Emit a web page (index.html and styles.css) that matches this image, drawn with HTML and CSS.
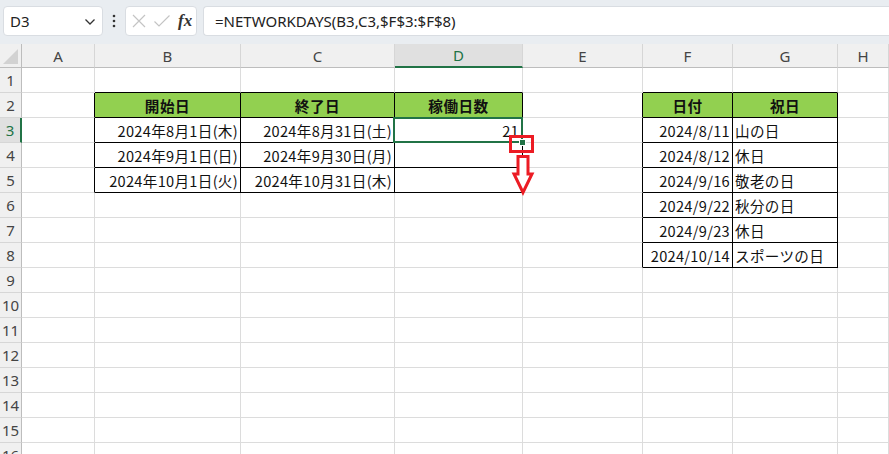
FILE: index.html
```html
<!DOCTYPE html>
<html lang="ja">
<head>
<meta charset="utf-8">
<title>NETWORKDAYS</title>
<link rel="stylesheet" href="styles.css">
</head>
<body>
<div class="app">
  <div class="toolbar">
    <div class="namebox">
      <span class="nb-text">D3</span>
      <svg class="chev" width="12" height="8" viewBox="0 0 12 8"><path d="M1.5 1.5 L6 6 L10.5 1.5" fill="none" stroke="#333" stroke-width="1.3"/></svg>
    </div>
    <div class="dots">
      <svg width="4" height="14" viewBox="0 0 4 14"><circle cx="2" cy="2" r="1.3" fill="#333"/><circle cx="2" cy="7" r="1.3" fill="#333"/><circle cx="2" cy="12" r="1.3" fill="#333"/></svg>
    </div>
    <div class="fxbox">
      <svg width="16" height="16" viewBox="0 0 16 16"><path d="M2 2 L14 14 M14 2 L2 14" stroke="#c4c4c4" stroke-width="1.2" fill="none"/></svg>
      <svg width="18" height="16" viewBox="0 0 18 16"><path d="M1.5 8.5 L6 13 L16.5 2.5" stroke="#c4c4c4" stroke-width="1.2" fill="none"/></svg>
      <span class="fx">fx</span>
    </div>
    <div class="formula">=NETWORKDAYS(B3,C3,$F$3:$F$8)</div>
  </div>

  <div class="sheet">
    <div class="corner"><svg width="22" height="24" viewBox="0 0 22 24"><path d="M3 20 L18 5 L18 20 Z" fill="#d2d2d2"/></svg></div>
    <div class="ch">A</div><div class="ch">B</div><div class="ch">C</div><div class="ch sel">D</div><div class="ch">E</div><div class="ch">F</div><div class="ch">G</div><div class="ch">H</div>

    <div class="rh">1</div><div class="c"></div><div class="c tt"></div><div class="c tt"></div><div class="c tt"></div><div class="c"></div><div class="c tt"></div><div class="c tt"></div><div class="c"></div>

    <div class="rh">2</div><div class="c tl"></div><div class="c t hd">開始日</div><div class="c t hd">終了日</div><div class="c t hd">稼働日数</div><div class="c tl"></div><div class="c t hd">日付</div><div class="c t hd">祝日</div><div class="c"></div>

    <div class="rh rsel">3</div><div class="c tl"></div><div class="c t r">2024年8月1日(木)</div><div class="c t r">2024年8月31日(土)</div><div class="c t r active">21<span class="handle"></span></div><div class="c tl"></div><div class="c t r">2024/8/11</div><div class="c t l">山の日</div><div class="c"></div>

    <div class="rh">4</div><div class="c tl"></div><div class="c t r">2024年9月1日(日)</div><div class="c t r">2024年9月30日(月)</div><div class="c t"></div><div class="c tl"></div><div class="c t r">2024/8/12</div><div class="c t l">休日</div><div class="c"></div>

    <div class="rh">5</div><div class="c tl"></div><div class="c t r">2024年10月1日(火)</div><div class="c t r">2024年10月31日(木)</div><div class="c t"></div><div class="c tl"></div><div class="c t r">2024/9/16</div><div class="c t l">敬老の日</div><div class="c"></div>

    <div class="rh">6</div><div class="c"></div><div class="c"></div><div class="c"></div><div class="c"></div><div class="c tl"></div><div class="c t r">2024/9/22</div><div class="c t l">秋分の日</div><div class="c"></div>

    <div class="rh">7</div><div class="c"></div><div class="c"></div><div class="c"></div><div class="c"></div><div class="c tl"></div><div class="c t r">2024/9/23</div><div class="c t l">休日</div><div class="c"></div>

    <div class="rh">8</div><div class="c"></div><div class="c"></div><div class="c"></div><div class="c"></div><div class="c tl"></div><div class="c t r">2024/10/14</div><div class="c t l">スポーツの日</div><div class="c"></div>

    <div class="rh">9</div><div class="c"></div><div class="c"></div><div class="c"></div><div class="c"></div><div class="c"></div><div class="c"></div><div class="c"></div><div class="c"></div>
    <div class="rh">10</div><div class="c"></div><div class="c"></div><div class="c"></div><div class="c"></div><div class="c"></div><div class="c"></div><div class="c"></div><div class="c"></div>
    <div class="rh">11</div><div class="c"></div><div class="c"></div><div class="c"></div><div class="c"></div><div class="c"></div><div class="c"></div><div class="c"></div><div class="c"></div>
    <div class="rh">12</div><div class="c"></div><div class="c"></div><div class="c"></div><div class="c"></div><div class="c"></div><div class="c"></div><div class="c"></div><div class="c"></div>
    <div class="rh">13</div><div class="c"></div><div class="c"></div><div class="c"></div><div class="c"></div><div class="c"></div><div class="c"></div><div class="c"></div><div class="c"></div>
    <div class="rh">14</div><div class="c"></div><div class="c"></div><div class="c"></div><div class="c"></div><div class="c"></div><div class="c"></div><div class="c"></div><div class="c"></div>
    <div class="rh">15</div><div class="c"></div><div class="c"></div><div class="c"></div><div class="c"></div><div class="c"></div><div class="c"></div><div class="c"></div><div class="c"></div>
    <div class="rh">16</div><div class="c"></div><div class="c"></div><div class="c"></div><div class="c"></div><div class="c"></div><div class="c"></div><div class="c"></div><div class="c"></div>
  </div>

  <svg class="annot" width="889" height="454" viewBox="0 0 889 454">
    <rect x="510.5" y="136.5" width="22" height="15" fill="none" stroke="#ec1c24" stroke-width="3"/>
    <path d="M518 156.5 L528 156.5 L528 174 L532 174 L523 192.5 L514 174 L518 174 Z" fill="#ffffff" stroke="#ec1c24" stroke-width="3" stroke-linejoin="miter"/>
  </svg>
</div>
</body>
</html>
```

FILE: styles.css
```css
* { box-sizing: border-box; }
html, body { margin: 0; padding: 0; }
body {
  width: 889px;
  height: 454px;
  overflow: hidden;
  background: #ffffff;
  font-family: "Noto Sans", "Noto Sans CJK JP", sans-serif;
  color: #222;
}
.app { position: relative; width: 889px; height: 454px; overflow: hidden; }

.toolbar {
  height: 44px;
  background: #e9edf1;
  display: flex;
  align-items: center;
  padding: 0 0 2px 3px;
}
.namebox {
  width: 100px;
  height: 30px;
  background: #fff;
  border: 1px solid #d9dde2;
  border-radius: 4px;
  display: flex;
  align-items: center;
  justify-content: space-between;
  padding: 0 6px 0 6px;
}
.nb-text { font-size: 15px; color: #222; }
.chev { margin-top: 2px; }
.dots { width: 22px; display: flex; justify-content: center; align-items: center; }
.fxbox {
  width: 72px;
  height: 30px;
  background: #fff;
  border: 1px solid #d9dde2;
  border-radius: 4px;
  display: flex;
  align-items: center;
  gap: 6px;
  padding: 0 0 0 5px;
}
.fx {
  font-family: "Liberation Serif", "DejaVu Serif", serif;
  font-style: italic;
  font-weight: bold;
  font-size: 17px;
  color: #333;
  margin-left: 1px;
}
.formula {
  margin-left: 6px;
  flex: 1;
  height: 30px;
  background: #fff;
  border: 1px solid #d9dde2;
  border-right: none;
  border-radius: 4px 0 0 4px;
  display: flex;
  align-items: center;
  padding-left: 11px;
  font-size: 15px;
  color: #222;
}

.sheet {
  display: grid;
  grid-template-columns: 22px 73px 146px 154px 128px 120px 90px 105px 51px;
  grid-template-rows: 24px repeat(16, 25px);
}
.corner {
  background: #f0f0f0;
  border-right: 1px solid #bdbdbd;
  border-bottom: 1px solid #bdbdbd;
}
.corner svg { display: block; }
.ch {
  background: #f0f0f0;
  border-right: 1px solid #d6d6d6;
  border-bottom: 1px solid #bdbdbd;
  display: flex;
  align-items: center;
  justify-content: center;
  font-size: 15px;
  color: #444;
}
.ch.sel {
  background: #e0e0e0;
  color: #217346;
  border-bottom: 2px solid #217346;
}
.rh {
  background: #f0f0f0;
  border-right: 1px solid #bdbdbd;
  border-bottom: 1px solid #d6d6d6;
  display: flex;
  align-items: center;
  justify-content: center;
  font-size: 15px;
  color: #444;
}
.rh.rsel {
  background: #e0e0e0;
  color: #217346;
  border-right: 2px solid #217346;
}
.c {
  border-right: 1px solid #dcdcdc;
  border-bottom: 1px solid #dcdcdc;
  font-family: "Noto Sans CJK JP", sans-serif;
  font-size: 14.6px;
  letter-spacing: 0.3px;
  color: #111;
  display: flex;
  align-items: center;
  white-space: nowrap;
  overflow: visible;
}
.c.tl { border-right-color: #000; }
.c.tt { border-bottom-color: #000; }
.c.t { border-right-color: #000; border-bottom-color: #000; }
.c.hd {
  background: #92d050;
  font-weight: bold;
  justify-content: center;
  letter-spacing: 0.5px;
}
.c.r { justify-content: flex-end; padding-right: 2px; }
.c.l { justify-content: flex-start; padding-left: 2px; }

.c.active { position: relative; padding-right: 3px; }
.c.active::after {
  content: "";
  position: absolute;
  left: -2px;
  top: -1px;
  right: -1px;
  bottom: -1px;
  border: 2px solid #217346;
  pointer-events: none;
}
.handle {
  position: absolute;
  right: -4px;
  bottom: -4px;
  width: 7px;
  height: 7px;
  background: #217346;
  border: 1px solid #fff;
  z-index: 2;
}

.annot {
  position: absolute;
  left: 0;
  top: 0;
  pointer-events: none;
}
```
